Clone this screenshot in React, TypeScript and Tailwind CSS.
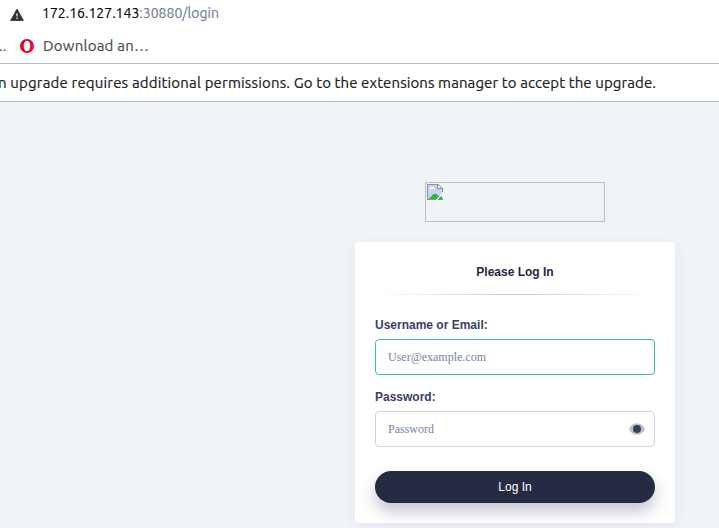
import React from "react";

const uiFont = "font-['Ubuntu','Noto_Sans',sans-serif]";

function BrowserBar() {
  return (
    <header className={`bg-white ${uiFont}`}>
      <div className="flex h-7 items-start pl-[10px]">
        <svg className="mt-[8px] shrink-0" width="14" height="13" viewBox="0 0 14 13">
          <path d="M7 1 L13.4 12.5 H0.6 Z" fill="#29313e" stroke="#29313e" strokeWidth="0.8" strokeLinejoin="round" />
          <path d="M6.3 5.2h1.4v3.4H6.3zM6.3 9.6h1.4v1.3H6.3z" fill="#d8dbe0" />
        </svg>
        <div className="ml-[18px] mt-[3px] whitespace-pre text-[14px] leading-5 text-[#6f7d95] [-webkit-text-stroke:0.15px]">
          <span className="tracking-[0.01px] text-black">172.16.127.143</span>
          <span className="tracking-[0.02px]">:30880/login</span>
        </div>
      </div>
      <div className="flex h-[35px] items-start">
        <span className="-ml-px mt-[8px] w-[21px] shrink-0 whitespace-pre text-[15px] leading-5 text-[#4b515c]">..</span>
        <svg className="mt-[11px] shrink-0" width="14" height="14" viewBox="0 0 14 14">
          <defs>
            <linearGradient id="ring" x1="0" x2="1">
              <stop offset="0" stopColor="#f5001b" />
              <stop offset="0.55" stopColor="#d0001b" />
              <stop offset="1" stopColor="#f5103c" />
            </linearGradient>
          </defs>
          <path fillRule="evenodd" fill="url(#ring)" d="M7 0a7 7 0 1 0 0 14A7 7 0 0 0 7 0ZM7 1.8c2.2 0 3.3 2.4 3.3 5.2s-1.1 5.2-3.3 5.2S3.7 9.8 3.7 7 4.8 1.8 7 1.8Z" />
        </svg>
        <span className="ml-[9px] mt-[8px] whitespace-pre text-[15px] leading-5 tracking-[0.23px] text-[#4b4b4b] [-webkit-text-stroke:0.2px]">Download an…</span>
      </div>
      <div className="flex h-[39px] items-center border-y border-[#b4bdcc] text-[15px] leading-5 text-[#202124] [-webkit-text-stroke:0.2px]">
        <p className="-ml-[2px] whitespace-pre">
          <span className="tracking-[0.17px]">n upgrade requires additional permissions. </span>
          <span className="tracking-[0.09px]">Go to the extensions manager to accept the upgrade.</span>
        </p>
      </div>
    </header>
  );
}

function MissingLogo() {
  return (
    <div className="h-10 w-[180px] border border-[#c0c0c0] p-px">
      <svg width="16" height="16" viewBox="0 0 16 16" shapeRendering="crispEdges">
        <path d="M1 1h10l4 4v10H1z" fill="#c6d3f7" />
        <path d="M3 5V4h1V3h3v1h1v1z" fill="#fff" />
        <path d="M2 15v-1h1v-1h1v-1h1v-1h1v-1h4v1h1v1h1v1h1v-1h2v3z" fill="#2dba35" />
        <path d="M0 0h11v1H1v14h14v-1h1v2H0z" fill="#909090" />
        <path d="M11 1h1v1h1v1h1v1h1v1h-4z" fill="#f5f7fd" />
        <path d="M11 0h1v1h1v1h1v1h1v1h1v4h-1V5h-5V1h1v3h3V3h-1V2h-1V1h-1z" fill="#909090" />
        <path d="M16 8v3h-1v1h-1v1h-1v1h-1v1h-1v1H9v-1h1v-1h1v-1h1v-1h1v-1h1v-1h1V8z" fill="#f0f3f8" />
      </svg>
    </div>
  );
}

function Field({ label, placeholder, password = false }: { label: string; placeholder: string; password?: boolean }) {
  return (
    <label className="block">
      <span className="block h-5 text-[12px] font-bold leading-5 text-[#3b4063]">{label}</span>
      <span className={`mt-1 flex h-9 items-center rounded-[4px] border bg-white pl-3 pr-[9px] ${password ? "border-[#ccd3db]" : "border-[#36c38c]"}`}>
        <input
          type={password ? "password" : "text"}
          placeholder={placeholder}
          className="min-w-0 flex-1 bg-transparent font-['Liberation_Serif',serif] text-[12px] leading-5 outline-none placeholder:text-[#73849f]"
        />
        {password && (
          <svg width="16" height="16" viewBox="0 0 16 16">
            <path d="M0 8C1.5 4.3 4.4 2.2 8 2.2S14.5 4.3 16 8c-1.5 3.7-4.4 5.8-8 5.8S1.5 11.7 0 8Z" fill="#b6c2cd" />
            <circle cx="8" cy="8" r="4" fill="#324558" />
          </svg>
        )}
      </span>
    </label>
  );
}

export default function App() {
  return (
    <div className="h-[528px] w-[719px] overflow-hidden bg-[#f0f3f8] font-['Liberation_Sans',sans-serif]">
      <BrowserBar />
      <main className="ml-[355px] flex w-80 flex-col items-center pt-20">
        <MissingLogo />
        <form className="mt-5 h-[281px] w-80 rounded-[4px] bg-white px-5 pt-5 shadow-[0_4px_16px_0_rgba(39,50,71,0.06)]">
          <h1 className="text-center text-[12px] font-bold leading-5 text-[#242842]">Please Log In</h1>
          <div className="mt-3 h-px bg-[linear-gradient(to_right,rgba(193,201,209,0),#c1c9d1,rgba(193,201,209,0))]" />
          <div className="mt-5 flex flex-col gap-3">
            <Field label="Username or Email:" placeholder="User@example.com" />
            <Field label="Password:" placeholder="Password" password />
          </div>
          <button type="button" className="mt-6 block h-8 w-full rounded-full bg-[#262a43] text-[12px] leading-5 text-white shadow-[0_8px_16px_0_rgba(36,40,66,0.28)]">Log In</button>
        </form>
      </main>
    </div>
  );
}
